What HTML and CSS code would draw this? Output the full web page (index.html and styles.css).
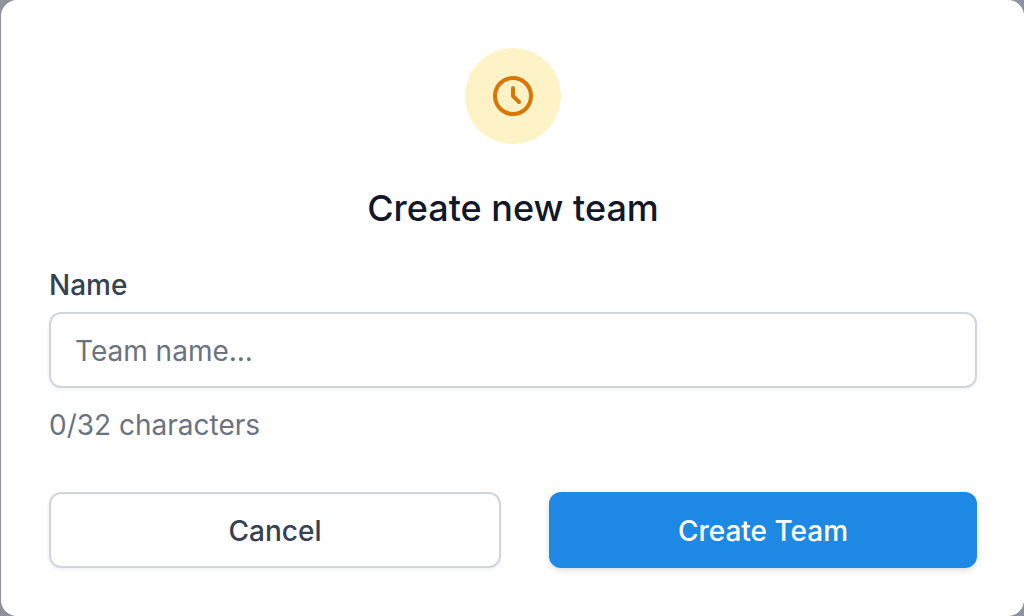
FILE: index.html
```html
<!DOCTYPE html>
<html lang="en">
<head>
<meta charset="utf-8">
<meta name="viewport" content="width=device-width, initial-scale=1">
<title>Create new team</title>
<link rel="stylesheet" href="styles.css">
</head>
<body class="backdrop">
<main class="dialog" role="dialog" aria-labelledby="dialog-title">
  <div class="badge">
    <svg class="badge-icon" viewBox="0 0 24 24" fill="none" stroke="currentColor" stroke-width="2" stroke-linecap="round" stroke-linejoin="round" aria-hidden="true"><path d="M12 8v4l3 3m6-3a9 9 0 11-18 0 9 9 0 0118 0z"/></svg>
  </div>
  <h1 class="title" id="dialog-title">Create new team</h1>
  <form class="form">
    <label class="label" for="team-name">Name</label>
    <input class="input" id="team-name" type="text" maxlength="32" placeholder="Team name..." aria-describedby="team-count">
    <p class="hint" id="team-count">0/32 characters</p>
    <div class="actions">
      <button class="button button-secondary" type="button">Cancel</button>
      <button class="button button-primary" type="submit">Create Team</button>
    </div>
  </form>
</main>
</body>
</html>
```

FILE: styles.css
```css
*, *::before, *::after { box-sizing: border-box; }

.backdrop {
  margin: 0;
  padding-left: 1px;
  background: #8f929e;
  font-family: Inter, "Liberation Sans", sans-serif;
}

.dialog {
  padding: 48px 47px 48px 48px;
  border-radius: 16px;
  background: #fff;
}

.badge {
  display: flex;
  align-items: center;
  justify-content: center;
  width: 96px;
  height: 96px;
  margin: 0 auto;
  border-radius: 50%;
  background: #fef3c7;
  color: #d97706;
}

.badge-icon { width: 48px; height: 48px; }

.title {
  margin: 40px 0 32px;
  color: #111827;
  font-size: 36px;
  font-weight: 500;
  line-height: 48px;
  text-align: center;
}

.form { display: flex; flex-direction: column; }

.label {
  margin-bottom: 6px;
  color: #374151;
  font-size: 28px;
  font-weight: 500;
  line-height: 42px;
}

.input {
  width: 100%;
  padding: 17px 24px 15px;
  border: 2px solid #d1d5db;
  border-radius: 12px;
  background: #fff;
  box-shadow: 0 2px 4px rgba(0, 0, 0, 0.05);
  color: #111827;
  font: 400 28px/40px Inter, "Liberation Sans", sans-serif;
}

.input::placeholder { color: #6b7280; opacity: 1; }

.hint {
  margin: 16px 0 46px;
  color: #6b7280;
  font-size: 28px;
  line-height: 42px;
}

.actions {
  display: grid;
  grid-template-columns: 113fr 107fr;
  gap: 48px;
}

.button {
  padding: 17px 32px 15px;
  border: 2px solid transparent;
  border-radius: 12px;
  box-shadow: 0 2px 4px rgba(0, 0, 0, 0.05);
  font: 500 28px/40px Inter, "Liberation Sans", sans-serif;
  cursor: pointer;
}

.button-secondary { border-color: #d1d5db; background: #fff; color: #374151; }

.button-primary {
  border-color: #1e88e5;
  background: #1e88e5;
  box-shadow: 0 2px 6px rgba(0, 0, 0, 0.15);
  color: #fff;
}
```
